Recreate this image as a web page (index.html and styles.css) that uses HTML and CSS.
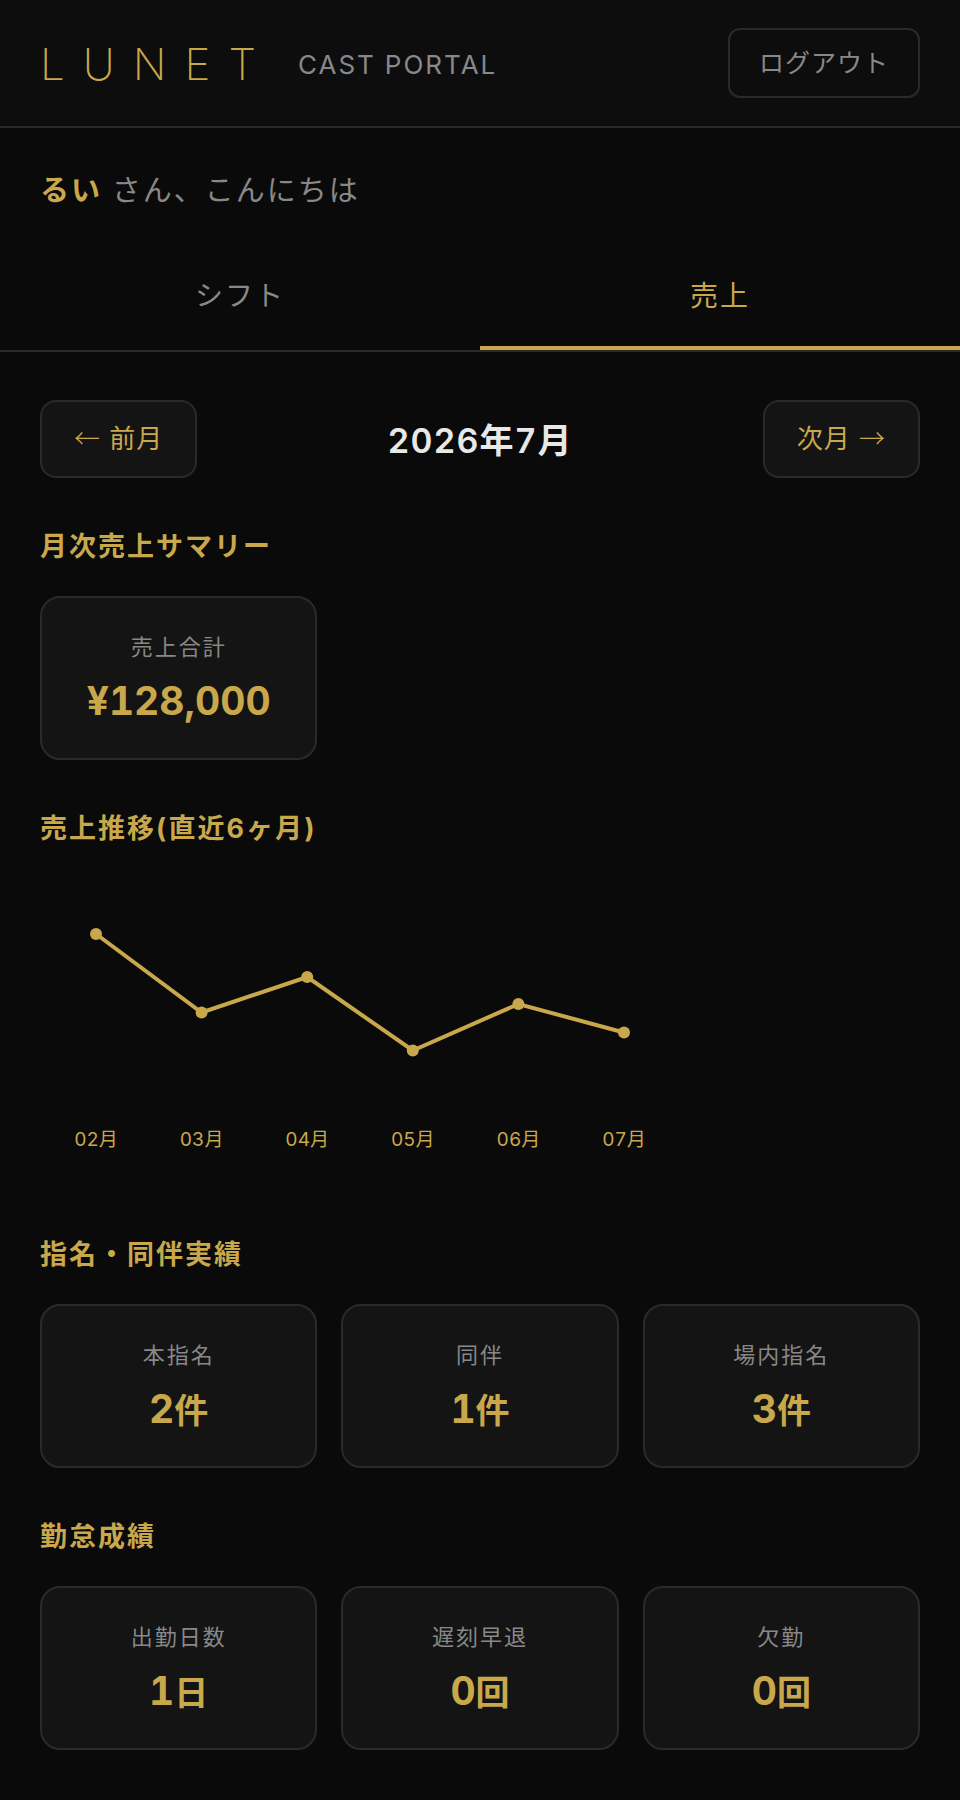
FILE: index.html
```html
<!DOCTYPE html>
<html lang="ja">
<head>
    <meta charset="UTF-8">
    <meta name="viewport" content="width=device-width, initial-scale=1.0">
    <title>LUNET CAST PORTAL</title>
    <link rel="stylesheet" href="styles.css">
</head>
<body>
    <header class="header">
        <div class="brand">
            <span class="logo">LUNET</span>
            <span class="logo-sub">CAST PORTAL</span>
        </div>
        <button type="button" class="logout-btn">ログアウト</button>
    </header>

    <p class="greeting"><strong>るい</strong> さん、こんにちは</p>

    <nav class="tabs">
        <button type="button" class="tab">シフト</button>
        <button type="button" class="tab active">売上</button>
    </nav>

    <main class="content">
        <div class="month-nav">
            <button type="button" class="month-btn"><span class="arrow">←</span> 前月</button>
            <h1 class="month-title">2026年7月</h1>
            <button type="button" class="month-btn">次月 <span class="arrow">→</span></button>
        </div>

        <section class="section">
            <h2 class="section-title">月次売上サマリー</h2>
            <div class="cards">
                <div class="card">
                    <div class="card-label">売上合計</div>
                    <div class="card-value">¥128,000</div>
                </div>
            </div>
        </section>

        <section class="section">
            <h2 class="section-title">売上推移(直近6ヶ月)</h2>
            <svg class="chart" viewBox="0 0 640 300" role="img" aria-label="売上推移">
                <polyline class="chart-line" points="56,56 161.6,134.5 267.2,99 372.8,172.5 478.4,126 584,154.5"/>
                <circle cx="56" cy="56" r="6"/>
                <circle cx="161.6" cy="134.5" r="6"/>
                <circle cx="267.2" cy="99" r="6"/>
                <circle cx="372.8" cy="172.5" r="6"/>
                <circle cx="478.4" cy="126" r="6"/>
                <circle cx="584" cy="154.5" r="6"/>
                <text x="56" y="268">02月</text>
                <text x="161.6" y="268">03月</text>
                <text x="267.2" y="268">04月</text>
                <text x="372.8" y="268">05月</text>
                <text x="478.4" y="268">06月</text>
                <text x="584" y="268">07月</text>
            </svg>
        </section>

        <section class="section">
            <h2 class="section-title">指名・同伴実績</h2>
            <div class="cards">
                <div class="card">
                    <div class="card-label">本指名</div>
                    <div class="card-value">2<span class="unit">件</span></div>
                </div>
                <div class="card">
                    <div class="card-label">同伴</div>
                    <div class="card-value">1<span class="unit">件</span></div>
                </div>
                <div class="card">
                    <div class="card-label">場内指名</div>
                    <div class="card-value">3<span class="unit">件</span></div>
                </div>
            </div>
        </section>

        <section class="section">
            <h2 class="section-title">勤怠成績</h2>
            <div class="cards">
                <div class="card">
                    <div class="card-label">出勤日数</div>
                    <div class="card-value">1<span class="unit">日</span></div>
                </div>
                <div class="card">
                    <div class="card-label">遅刻早退</div>
                    <div class="card-value">0<span class="unit">回</span></div>
                </div>
                <div class="card">
                    <div class="card-label">欠勤</div>
                    <div class="card-value">0<span class="unit">回</span></div>
                </div>
            </div>
        </section>
    </main>
</body>
</html>
```

FILE: styles.css
```css
:root {
    --bg: #0a0a0a;
    --header-bg: #0d0d0d;
    --card-bg: #141414;
    --border: #2a2a2a;
    --gold: #c9a84c;
    --muted: #888;
    --text: #e8e8e8;
}

* {
    box-sizing: border-box;
    margin: 0;
    padding: 0;
}

body {
    min-height: 100vh;
    background: var(--bg);
    color: var(--text);
    font-family: Inter, "Noto Sans CJK JP", sans-serif;
    font-variant-numeric: tabular-nums;
}

button {
    font-family: inherit;
    cursor: pointer;
}

/* Header */
.header {
    display: flex;
    justify-content: space-between;
    align-items: center;
    padding: 28px 40px;
    background: var(--header-bg);
    border-bottom: 2px solid var(--border);
}

.brand {
    display: flex;
    align-items: center;
    gap: 24px;
    padding-top: 2px;
}

.logo {
    font-size: 44px;
    line-height: 52px;
    font-weight: 200;
    letter-spacing: 18px;
    color: var(--gold);
}

.logo-sub {
    font-size: 26px;
    letter-spacing: 2px;
    color: var(--muted);
}

.logout-btn {
    padding: 14px 29px;
    background: transparent;
    border: 2px solid var(--border);
    border-radius: 12px;
    color: var(--muted);
    font-size: 25px;
    line-height: 38px;
    letter-spacing: 1px;
}

.greeting {
    padding: 40px 40px 30px;
    font-size: 29px;
    line-height: 46px;
    letter-spacing: 2px;
    color: var(--muted);
}

.greeting strong {
    font-weight: 600;
    color: var(--gold);
}

/* Tabs */
.tabs {
    display: flex;
    border-bottom: 2px solid var(--border);
}

.tab {
    flex: 1;
    padding: 30px 0 28px;
    background: none;
    border: none;
    border-bottom: 4px solid transparent;
    color: var(--muted);
    font-size: 28px;
    line-height: 44px;
    letter-spacing: 2px;
}

.tab.active {
    color: var(--gold);
    border-bottom-color: var(--gold);
}

.content {
    padding: 48px 40px;
}

/* Month navigation */
.month-nav {
    display: flex;
    justify-content: space-between;
    align-items: center;
}

.month-btn {
    padding: 18px 32px;
    background: var(--card-bg);
    border: 2px solid var(--border);
    border-radius: 16px;
    color: var(--gold);
    font-size: 26px;
    line-height: 38px;
    letter-spacing: 1px;
}

.arrow {
    font-family: "Noto Sans CJK JP", sans-serif;
    font-weight: 300;
    line-height: 1;
}

.month-title {
    padding-top: 4px;
    font-size: 34px;
    line-height: 44px;
    font-weight: 600;
    letter-spacing: 1px;
}

/* Sections */
.section {
    margin-top: 48px;
}

.section-title {
    margin-bottom: 28px;
    font-size: 27px;
    line-height: 42px;
    font-weight: 700;
    letter-spacing: 2px;
    color: var(--gold);
}

.cards {
    display: grid;
    grid-template-columns: repeat(3, 1fr);
    gap: 24px;
}

.card {
    padding: 32px 16px;
    background: var(--card-bg);
    border: 2px solid var(--border);
    border-radius: 20px;
    text-align: center;
}

.card-label {
    margin-bottom: 12px;
    font-size: 22px;
    line-height: 34px;
    letter-spacing: 2px;
    color: var(--muted);
}

.card-value {
    font-size: 39px;
    line-height: 50px;
    font-weight: 700;
    color: var(--gold);
}

.unit {
    font-size: 34px;
    line-height: 1;
}

/* Sales chart */
.chart {
    display: block;
    width: 100%;
    max-width: 640px;
    margin-bottom: 56px;
    fill: var(--gold);
}

.chart-line {
    fill: none;
    stroke: var(--gold);
    stroke-width: 4;
}

.chart text {
    font-size: 19px;
    text-anchor: middle;
}
```
